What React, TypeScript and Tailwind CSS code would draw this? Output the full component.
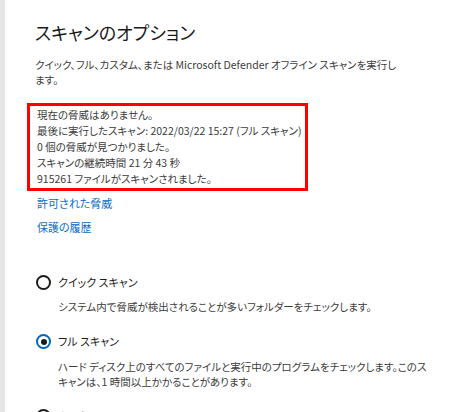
const font = "font-['Noto_Sans_CJK_JP',sans-serif] [font-feature-settings:'palt']";

const RadioOption = ({
  label,
  description,
  checked,
}: {
  label: string;
  description: string;
  checked?: boolean;
}) => {
  return (
    <div>
      <div className="flex items-center h-[20px]">
        {checked ? (
          <span className="flex items-center justify-center w-[15px] h-[15px] rounded-full border-2 border-[#0067c0]">
            <span className="w-[6px] h-[6px] rounded-full bg-[#1b1b1b]" />
          </span>
        ) : (
          <span className="w-[15px] h-[15px] rounded-full border-2 border-[#1b1b1b]" />
        )}
        <span className="ml-[7px] text-[11px] text-[#1b1b1b]">{label}</span>
      </div>
      <p className="ml-[22px] mt-[7px] w-[370px] text-[10.5px] leading-[15.5px] text-[#3c3c3c]">
        {description}
      </p>
    </div>
  );
};

const App = () => {
  return (
    <div className={`flex w-[450px] h-[412px] overflow-hidden bg-white ${font}`}>
      <div className="w-[5px] shrink-0 bg-[#e6e6e6]" />
      <div className="flex-1 pl-[30px] pt-[19px]">
        <h1 className="text-[18px] leading-[26px] text-[#1b1b1b]">スキャンのオプション</h1>
        <p className="mt-[12px] w-[365px] text-[10.5px] leading-[15px] text-[#3c3c3c]">
          クイック、フル、カスタム、または Microsoft Defender オフライン スキャンを実行します。
        </p>

        <div className="-ml-[8px] mt-[16px] w-[281px] border-[3px] border-[#ff0000] pl-[7px] py-[1px] text-[10.5px] leading-[16px] text-[#3c3c3c] whitespace-nowrap">
          <p>現在の脅威はありません。</p>
          <p>最後に実行したスキャン: 2022/03/22 15:27 (フル スキャン)</p>
          <p>0 個の脅威が見つかりました。</p>
          <p>スキャンの継続時間 21 分 43 秒</p>
          <p>915261 ファイルがスキャンされました。</p>
        </div>

        <div className="ml-[2px] mt-[4px] flex flex-col gap-[8px] text-[11px] leading-[16px] text-[#0a6cc8]">
          <a href="#">許可された脅威</a>
          <a href="#">保護の履歴</a>
        </div>

        <div className="ml-[1px] mt-[37px] flex flex-col gap-[17px]">
          <RadioOption
            label="クイック スキャン"
            description="システム内で脅威が検出されることが多いフォルダーをチェックします。"
          />
          <RadioOption
            checked
            label="フル スキャン"
            description="ハード ディスク上のすべてのファイルと実行中のプログラムをチェックします。このスキャンは、1 時間以上かかることがあります。"
          />
          <RadioOption
            label="カスタム スキャン"
            description="チェックするファイルと場所を選択します。"
          />
        </div>
      </div>
    </div>
  );
};

export default App;
